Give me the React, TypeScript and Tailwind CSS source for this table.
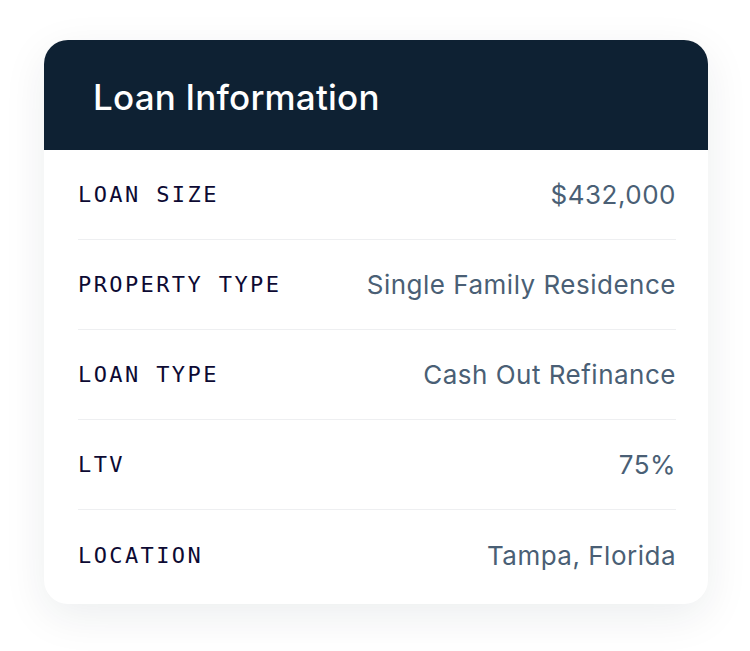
const rows = [
  { label: "LOAN SIZE", value: "$432,000" },
  { label: "PROPERTY TYPE", value: "Single Family Residence" },
  { label: "LOAN TYPE", value: "Cash Out Refinance" },
  { label: "LTV", value: "75%" },
  { label: "LOCATION", value: "Tampa, Florida" },
]

export default function App() {
  return (
    <div className="min-h-[651px] w-[750px] bg-white pt-10 pl-11">
      <div className="w-[664px] overflow-hidden rounded-[24px] bg-white shadow-[0_12px_44px_rgba(15,33,51,0.08)]">
        {/* Header */}
        <div className="flex h-[110px] items-center bg-[#0e2133] pl-[49px] pt-1">
          <h2 className="font-['Inter',sans-serif] text-[35px] font-medium tracking-[0.2px] text-white">
            Loan Information
          </h2>
        </div>

        {/* Rows */}
        <div className="pl-[34px] pr-8 pb-1">
          {rows.map((row, i) => (
            <div
              key={row.label}
              className={
                i < rows.length - 1
                  ? "flex h-[90px] items-center justify-between border-b border-[#eeeff1]"
                  : "flex h-[90px] items-center justify-between"
              }
            >
              <span className="font-['DejaVu_Sans_Mono',monospace] text-[22px] tracking-[2.4px] text-[#0d0a33]">
                {row.label}
              </span>
              <span className="font-['Inter',sans-serif] text-[26px] tracking-[0.5px] text-[#4a5f75]">
                {row.value}
              </span>
            </div>
          ))}
        </div>
      </div>
    </div>
  )
}
